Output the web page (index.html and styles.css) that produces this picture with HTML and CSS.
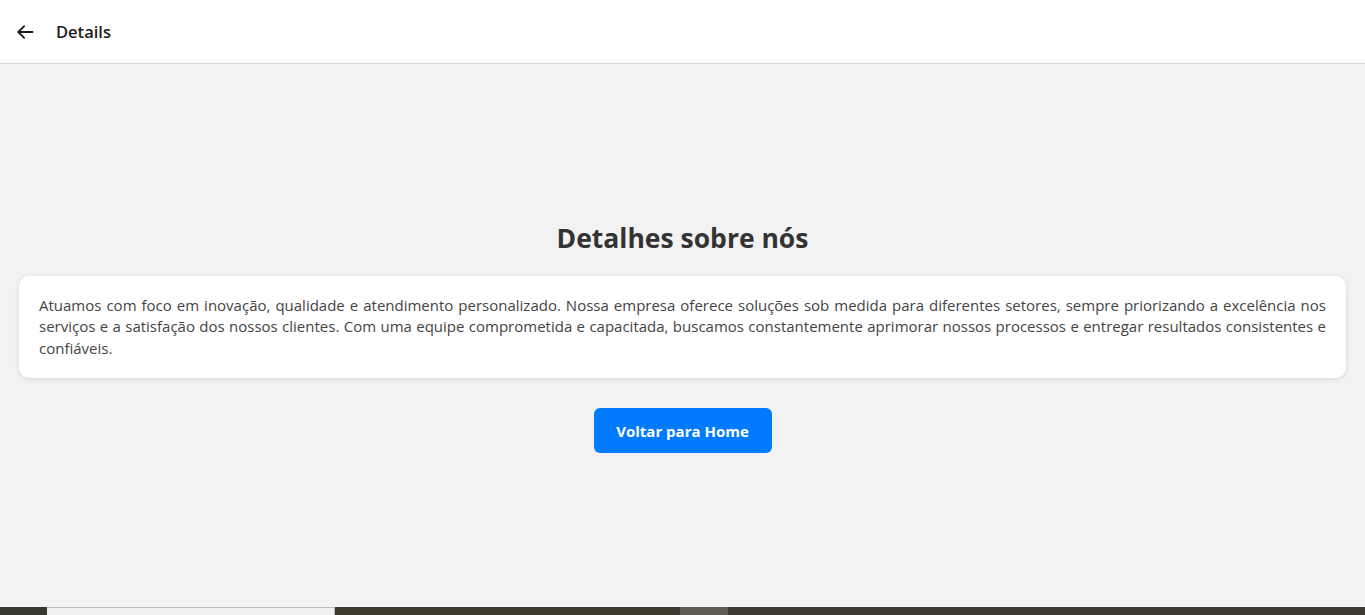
FILE: index.html
```html
<!DOCTYPE html>
<html lang="pt">
<head>
<meta charset="utf-8">
<title>Details</title>
<link rel="stylesheet" href="styles.css">
</head>
<body>
<div class="app">
  <header class="topbar">
    <button class="back" aria-label="Voltar">
      <svg width="20" height="20" viewBox="0 0 24 24" fill="none" stroke="#1c1c1c" stroke-width="2.2" stroke-linecap="round" stroke-linejoin="round"><path d="M21 12H4"/><path d="M11 5l-7 7 7 7"/></svg>
    </button>
    <h1 class="title">Details</h1>
  </header>
  <main class="content">
    <h2 class="heading">Detalhes sobre nós</h2>
    <div class="card">
      <p>Atuamos com foco em inovação, qualidade e atendimento personalizado. Nossa empresa oferece soluções sob medida para diferentes setores, sempre priorizando a excelência nos serviços e a satisfação dos nossos clientes. Com uma equipe comprometida e capacitada, buscamos constantemente aprimorar nossos processos e entregar resultados consistentes e confiáveis.</p>
    </div>
    <button class="primary">Voltar para Home</button>
  </main>
  <footer class="taskbar">
    <div class="tb-start"></div>
    <div class="tb-window"></div>
    <div class="tb-mid"></div>
    <div class="tb-active"></div>
    <div class="tb-rest"></div>
  </footer>
</div>
</body>
</html>
```
FILE: styles.css
```css
* { box-sizing: border-box; }
html, body { margin: 0; padding: 0; }
body {
  font-family: "Open Sans", "Noto Sans", "Liberation Sans", sans-serif;
  background: #f2f2f2;
  color: #333;
}
.app {
  height: 615px;
  display: flex;
  flex-direction: column;
}
.topbar {
  height: 64px;
  flex: none;
  background: #fff;
  border-bottom: 1px solid #d8d8d8;
  display: flex;
  align-items: center;
  padding-left: 15px;
}
.back {
  border: 0;
  background: none;
  padding: 0;
  width: 20px;
  height: 20px;
  display: flex;
  cursor: pointer;
}
.title {
  margin: 0 0 0 21px;
  font-size: 16.5px;
  font-weight: 600;
  color: #1c1c1c;
}
.content {
  flex: 1;
  display: flex;
  flex-direction: column;
  align-items: center;
  justify-content: center;
  padding: 2px 19px 0 19px;
}
.heading {
  margin: 0 0 20px;
  font-size: 26.5px;
  line-height: 36px;
  font-weight: 700;
  color: #333;
}
.card {
  align-self: stretch;
  background: #fff;
  border-radius: 10px;
  box-shadow: 0 1px 5px rgba(0,0,0,0.12);
  padding: 19px 20px 19px;
}
.card p {
  margin: 0;
  font-size: 15px;
  line-height: 21.5px;
  color: #444;
  text-align: justify;
}
.primary {
  margin-top: 30px;
  width: 178px;
  height: 45px;
  border: 0;
  border-radius: 6px;
  background: #007bff;
  color: #fff;
  font-family: inherit;
  font-size: 15px;
  font-weight: 700;
  cursor: pointer;
}
.taskbar {
  height: 8px;
  flex: none;
  display: flex;
  background: #3b3a30;
}
.tb-start { width: 47px; background: #3a392f; }
.tb-window { width: 288px; background: #f0f0f0; border-top: 1px solid #bdbdbd; border-right: 1px solid #bdbdbd; }
.tb-mid { width: 345px; background: #3c392e; }
.tb-active { width: 48px; background: #5e5b55; }
.tb-rest { flex: 1; background: #3d3a32; }
```
